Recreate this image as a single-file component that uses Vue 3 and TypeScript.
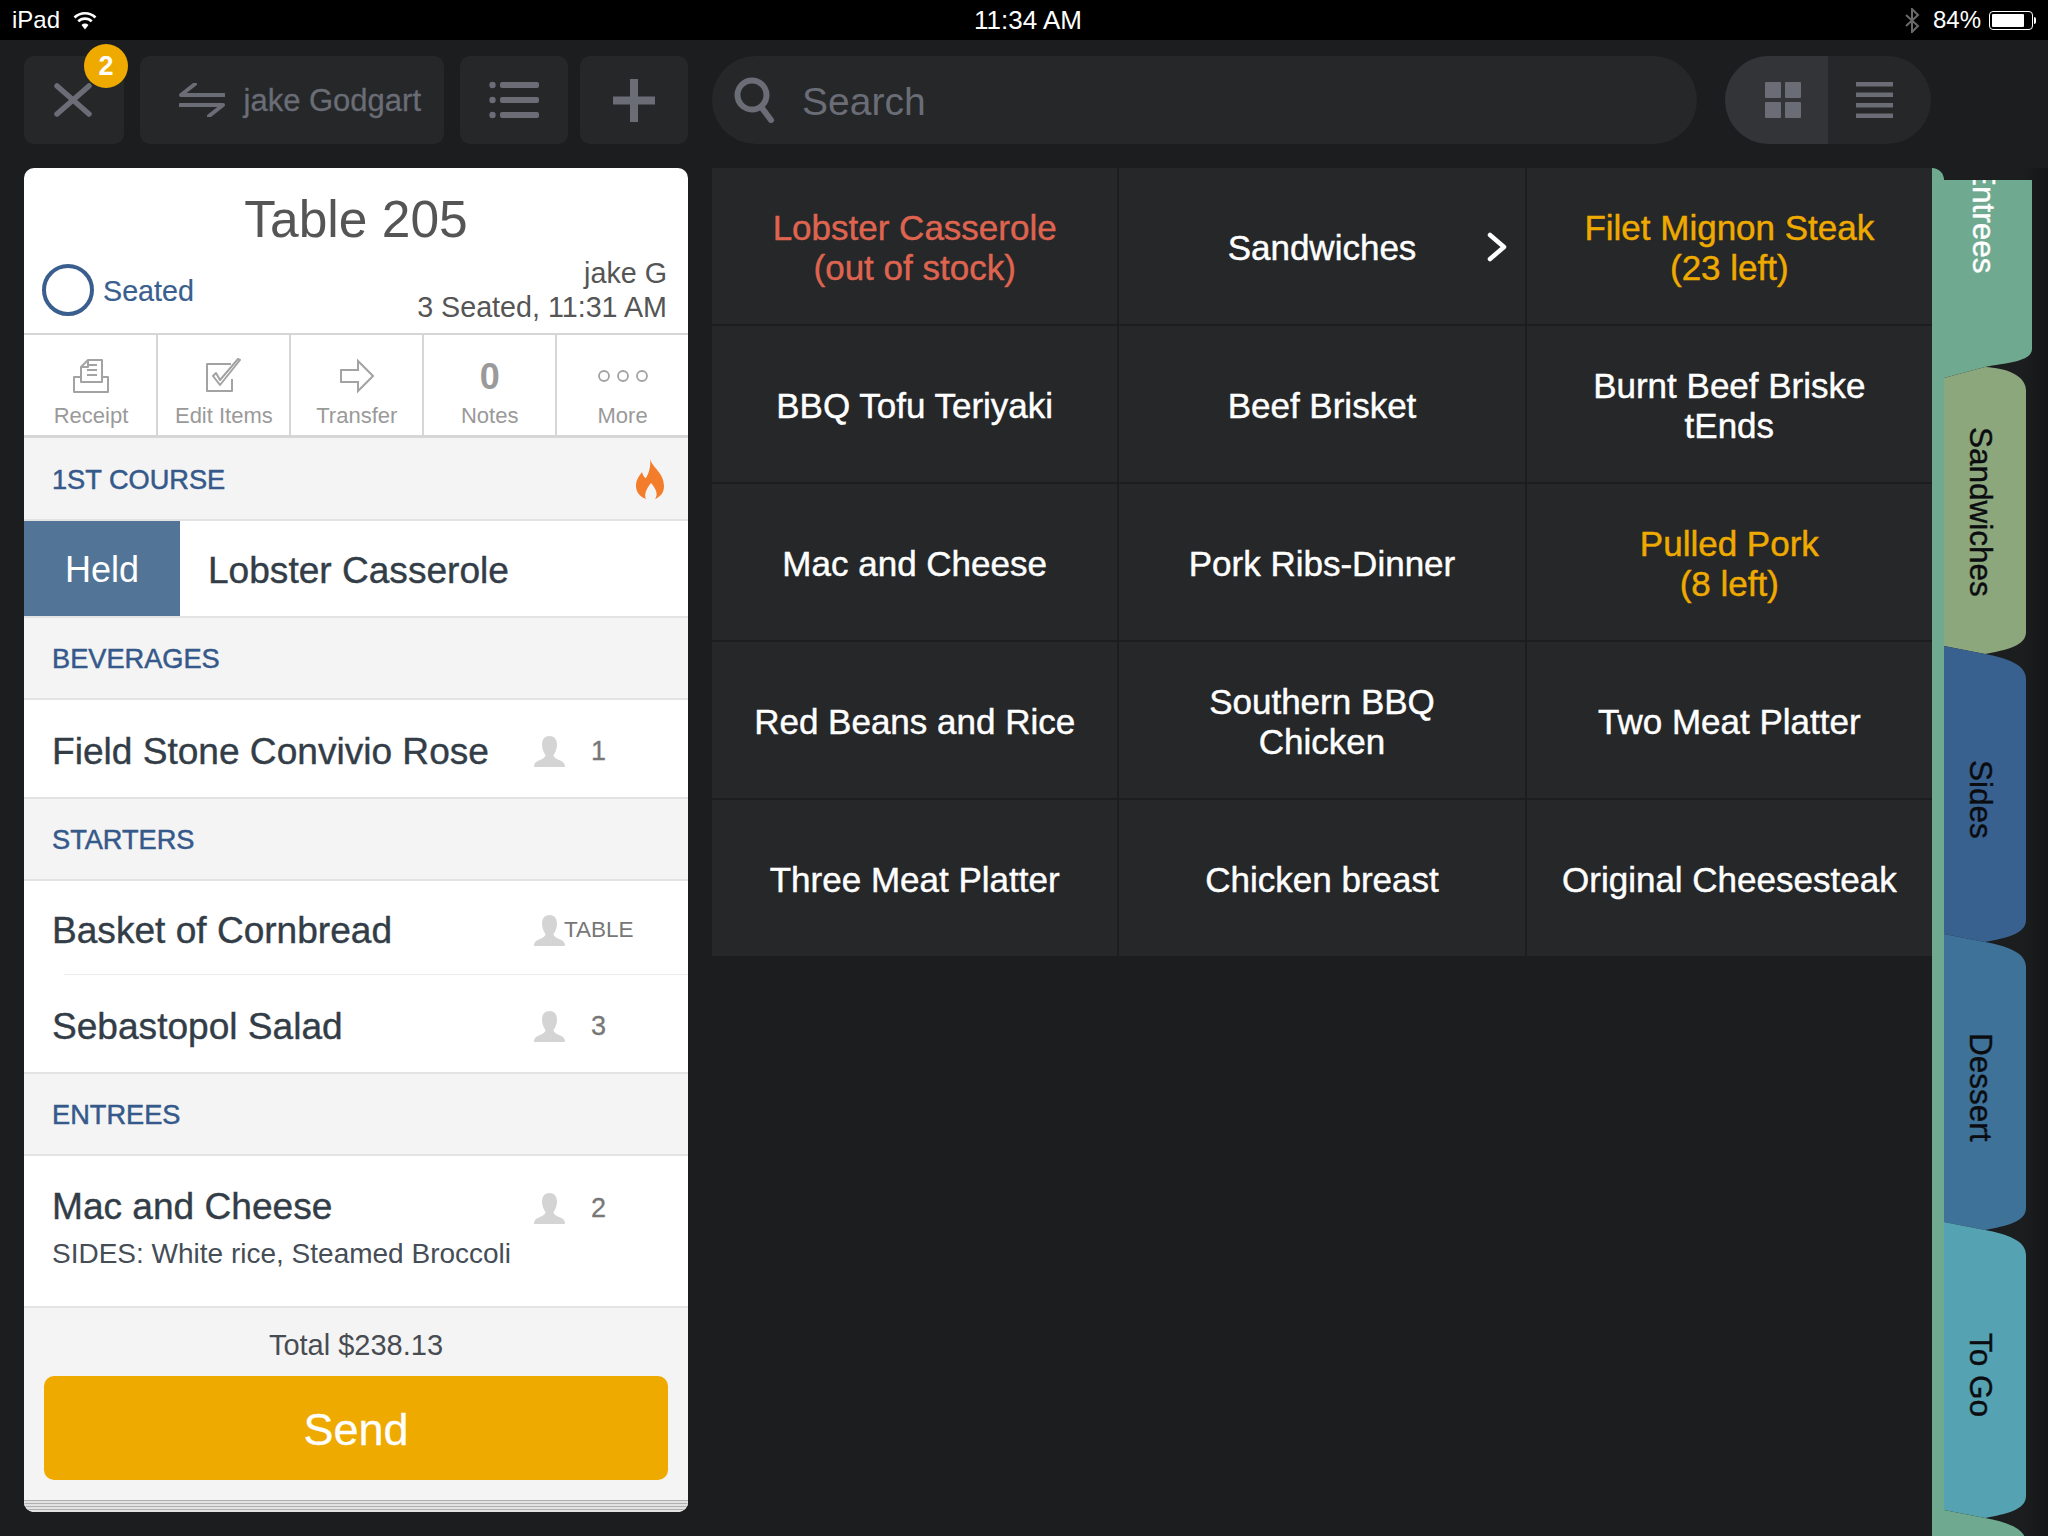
<script setup lang="ts">
interface MenuItem { lines: string[]; tone?: 'out' | 'low'; more?: boolean }
interface Tab { label: string; color: string; path: string; height: number; width: number; kind: string }
interface Action { label: string; icon: string }

const standardTab = 'M0 0 L41 8 C62 12 82 18 82 33 L82 274 C82 288 62 292 41 296 L0 288 Z'

const tabs: Tab[] = [
  { label: 'Entrees', color: '#6fa98f', height: 187, width: 100, kind: 'active', path: 'M0 0 L100 0 L100 169 C100 182 72 183 53 187 L12 198 L0 198 Z' },
  { label: 'Sandwiches', color: '#8da77d', height: 279, width: 82, kind: 'short', path: 'M0 11 L41 0 C62 1 82 8 82 24 L82 265 C82 279 62 283 41 287 L0 279 Z' },
  { label: 'Sides', color: '#396190', height: 288, width: 82, kind: '', path: standardTab },
  { label: 'Dessert', color: '#3f7299', height: 288, width: 82, kind: '', path: standardTab },
  { label: 'To Go', color: '#55a2b2', height: 288, width: 82, kind: '', path: standardTab },
  { label: '', color: '#6fa98f', height: 26, width: 82, kind: '', path: standardTab },
]

const menu: MenuItem[] = [
  { lines: ['Lobster Casserole', '(out of stock)'], tone: 'out' },
  { lines: ['Sandwiches'], more: true },
  { lines: ['Filet Mignon Steak', '(23 left)'], tone: 'low' },
  { lines: ['BBQ Tofu Teriyaki'] },
  { lines: ['Beef Brisket'] },
  { lines: ['Burnt Beef Briske', 'tEnds'] },
  { lines: ['Mac and Cheese'] },
  { lines: ['Pork Ribs-Dinner'] },
  { lines: ['Pulled Pork', '(8 left)'], tone: 'low' },
  { lines: ['Red Beans and Rice'] },
  { lines: ['Southern BBQ', 'Chicken'] },
  { lines: ['Two Meat Platter'] },
  { lines: ['Three Meat Platter'] },
  { lines: ['Chicken breast'] },
  { lines: ['Original Cheesesteak'] },
]

const actions: Action[] = [
  { label: 'Receipt', icon: 'receipt' },
  { label: 'Edit Items', icon: 'edit' },
  { label: 'Transfer', icon: 'transfer' },
  { label: 'Notes', icon: 'notes' },
  { label: 'More', icon: 'more' },
]

const personPath = 'M15.5 0C10 0 8 4 8 9C8 13 10 17 11.5 19C11.5 21 10 22 6 24C2 25.5 0 27 0 31L31 31C31 27 29 25.5 25 24C21 22 19.5 21 19.5 19C21 17 23 13 23 9C23 4 21 0 15.5 0Z'
</script>

<template>
  <div class="page">
    <header class="status">
      <div class="status-left">
        <span>iPad</span>
        <svg class="wifi" width="24" height="19" viewBox="0 0 24 19" fill="none" stroke="#fff" stroke-width="2.6">
          <path d="M1.5 6.5A15 15 0 0 1 22.5 6.5" />
          <path d="M5.3 10.4A9.5 9.5 0 0 1 18.7 10.4" />
          <path d="M8.5 14A5 5 0 0 1 15.5 14L12 18.5Z" fill="#fff" stroke="none" />
        </svg>
      </div>
      <div class="status-time">11:34 AM</div>
      <div class="status-right">
        <svg width="16" height="25" viewBox="0 0 16 25" fill="none" stroke="#6a6a6a" stroke-width="2">
          <path d="M2 7L14 18L8 24V1L14 7L2 18" />
        </svg>
        <span class="pct">84%</span>
        <div class="battery"><div class="battery-fill"></div></div>
        <div class="battery-nub"></div>
      </div>
    </header>

    <nav class="toolbar">
      <div class="btn btn-close">
        <svg width="38" height="34" viewBox="0 0 38 34" fill="none" stroke="#6a6d76" stroke-width="5.5" stroke-linecap="round">
          <path d="M3 3L35 31M35 3L3 31" />
        </svg>
        <span class="badge">2</span>
      </div>
      <div class="btn btn-user">
        <svg width="46" height="34" viewBox="0 0 46 34" fill="none" stroke="#6a6d76" stroke-width="4" stroke-linecap="round" stroke-linejoin="round">
          <path d="M45 12H2L16 1M1 22H44L30 33" />
        </svg>
        <span class="user-name">jake Godgart</span>
      </div>
      <div class="btn btn-list">
        <svg width="50" height="38" viewBox="0 0 50 38" fill="#6a6d76">
          <circle cx="3.5" cy="4" r="3.2" /><rect x="11" y="1" width="39" height="6" rx="2" />
          <circle cx="3.5" cy="19" r="3.2" /><rect x="11" y="16" width="39" height="6" rx="2" />
          <circle cx="3.5" cy="34" r="3.2" /><rect x="11" y="31" width="39" height="6" rx="2" />
        </svg>
      </div>
      <div class="btn btn-plus">
        <svg width="42" height="43" viewBox="0 0 42 43" fill="#6a6d76">
          <rect x="17" y="0" width="8" height="43" /><rect x="0" y="17.5" width="42" height="8" />
        </svg>
      </div>
      <div class="search">
        <svg width="42" height="46" viewBox="0 0 42 46" fill="none" stroke="#6a6d76" stroke-width="6" stroke-linecap="round">
          <circle cx="18" cy="18" r="14.5" /><path d="M28 31L37 43" />
        </svg>
        <span class="search-text">Search</span>
      </div>
      <div class="toggle">
        <div class="toggle-on">
          <svg width="36" height="36" viewBox="0 0 36 36" fill="#6a6d76">
            <rect width="16" height="16" rx="1" /><rect x="20" width="16" height="16" rx="1" />
            <rect y="20" width="16" height="16" rx="1" /><rect x="20" y="20" width="16" height="16" rx="1" />
          </svg>
        </div>
        <div class="toggle-off">
          <svg width="37" height="36" viewBox="0 0 37 36" fill="#6a6d76">
            <rect y="0" width="37" height="4.5" /><rect y="10.5" width="37" height="4.5" />
            <rect y="21" width="37" height="4.5" /><rect y="31.5" width="37" height="4.5" />
          </svg>
        </div>
      </div>
    </nav>

    <main class="main">
      <section class="card">
        <div class="card-head">
          <h1 class="title">Table 205</h1>
          <div class="meta">
            <div class="seated"><span class="ring"></span><span class="seated-text">Seated</span></div>
            <div class="meta-right"><div>jake G</div><div>3 Seated, 11:31 AM</div></div>
          </div>
        </div>

        <div class="actions">
          <div v-for="a in actions" :key="a.label" class="action">
            <div class="action-icon">
              <svg v-if="a.icon === 'receipt'" width="36" height="36" viewBox="0 0 36 36" fill="none" stroke="#a3a3a3" stroke-width="2" stroke-linejoin="round">
                <path d="M8 22V9L15 2H29V22" />
                <path d="M15 2V9H8" />
                <path d="M14 12H24M14 17H24M16 7H24" />
                <path d="M8 19H1V34H35V19H29V24H8Z" />
              </svg>
              <svg v-else-if="a.icon === 'edit'" width="36" height="36" viewBox="0 0 36 36" fill="none" stroke="#a3a3a3" stroke-width="2" stroke-linejoin="round">
                <path d="M25 6H1V33H26V21" />
                <path d="M7 18L14 27L34 2L32 1L14 22L10 15Z" />
              </svg>
              <svg v-else-if="a.icon === 'transfer'" width="34" height="36" viewBox="0 0 34 36" fill="none" stroke="#a3a3a3" stroke-width="2" stroke-linejoin="miter">
                <path d="M1 12H18V3L33 18L18 33V24H1Z" />
              </svg>
              <span v-else-if="a.icon === 'notes'" class="notes-count">0</span>
              <svg v-else width="50" height="12" viewBox="0 0 50 12" fill="none" stroke="#a3a3a3" stroke-width="1.8">
                <circle cx="6" cy="6" r="5" /><circle cx="25" cy="6" r="5" /><circle cx="44" cy="6" r="5" />
              </svg>
            </div>
            <div class="action-label">{{ a.label }}</div>
          </div>
        </div>

        <div class="section section-first">
          <span>1ST COURSE</span>
          <svg class="flame" width="28" height="40" viewBox="0 0 28 40" fill="#f47d2c">
            <path d="M14 0C16 8 28 14 28 27C28 34 24 38 19 40C22 36 21 31 15 24C10 30 8 36 10 40C4 38 0 33 0 27C0 20 4 16 6 13C7 17 9 19 10 19C13 14 15 7 14 0Z" />
          </svg>
        </div>
        <div class="row row-held">
          <div class="held">Held</div>
          <div class="item-name held-name">Lobster Casserole</div>
        </div>

        <div class="section">BEVERAGES</div>
        <div class="row row-item row-field">
          <div class="item-name">Field Stone Convivio Rose</div>
          <div class="seat"><svg width="31" height="31" viewBox="0 0 31 31" fill="#d4d4d4"><path :d="personPath" /></svg><span class="seat-num">1</span></div>
        </div>

        <div class="section">STARTERS</div>
        <div class="row row-item row-basket">
          <div class="item-name">Basket of Cornbread</div>
          <div class="seat"><svg width="31" height="31" viewBox="0 0 31 31" fill="#d4d4d4"><path :d="personPath" /></svg><span class="seat-table">TABLE</span></div>
        </div>
        <div class="rule"></div>
        <div class="row row-item row-salad">
          <div class="item-name">Sebastopol Salad</div>
          <div class="seat"><svg width="31" height="31" viewBox="0 0 31 31" fill="#d4d4d4"><path :d="personPath" /></svg><span class="seat-num">3</span></div>
        </div>

        <div class="section">ENTREES</div>
        <div class="row-mac">
          <div class="mac-top">
            <div class="item-name">Mac and Cheese</div>
            <div class="seat seat-mac"><svg width="31" height="31" viewBox="0 0 31 31" fill="#d4d4d4"><path :d="personPath" /></svg><span class="seat-num">2</span></div>
          </div>
          <div class="sides">SIDES: White rice, Steamed Broccoli</div>
        </div>

        <div class="foot">
          <div class="total">Total $238.13</div>
          <div class="send">Send</div>
          <div class="stack"></div>
        </div>
      </section>

      <section class="menu">
        <div v-for="(m, i) in menu" :key="i" class="cell" :class="m.tone">
          <div v-for="line in m.lines" :key="line">{{ line }}</div>
          <svg v-if="m.more" class="chevron" width="20" height="30" viewBox="0 0 20 30" fill="none" stroke="#fff" stroke-width="4.5" stroke-linecap="round" stroke-linejoin="round">
            <path d="M3 3L17 15L3 27" />
          </svg>
        </div>
      </section>

      <aside class="rail">
        <div class="tabs">
          <div
            v-for="t in tabs"
            :key="t.color + t.label"
            class="tab"
            :class="t.kind"
            :style="{ height: t.height + 'px', width: t.width + 'px' }"
          >
            <svg class="tab-shape" :width="t.width" :height="t.height" :viewBox="`0 0 ${t.width} ${t.height}`" :fill="t.color">
              <path :d="t.path" />
            </svg>
            <span v-if="t.label" class="tab-label">{{ t.label }}</span>
          </div>
        </div>
      </aside>
    </main>
  </div>
</template>

<style scoped>
.page {
  width: 2048px;
  height: 1536px;
  overflow: hidden;
  background: #1b1d1f;
  font-family: "Liberation Sans", Arial, sans-serif;
}

/* status bar */
.status {
  height: 40px;
  background: #000;
  color: #fff;
  display: grid;
  grid-template-columns: 1fr auto 1fr;
  align-items: center;
  font-size: 24px;
}
.status-left {
  display: flex;
  align-items: center;
  gap: 13px;
  padding-left: 12px;
}
.status-time { font-size: 26px; padding-left: 8px; }
.status-right {
  display: flex;
  align-items: center;
  justify-content: flex-end;
  padding-right: 12px;
}
.pct { margin-left: 13px; margin-right: 8px; }
.battery {
  width: 44px;
  height: 19px;
  box-sizing: border-box;
  border: 1.5px solid #fff;
  border-radius: 4px;
  padding: 2px;
}
.battery-fill { width: 84%; height: 100%; background: #fff; border-radius: 1px; }
.battery-nub { width: 2px; height: 7px; background: #fff; margin-left: 1px; border-radius: 0 2px 2px 0; }

/* toolbar */
.toolbar {
  display: flex;
  padding: 16px 0 0 24px;
  height: 88px;
  color: #6a6d76;
}
.btn {
  height: 88px;
  background: #252729;
  border-radius: 10px;
  display: flex;
  align-items: center;
  justify-content: center;
  position: relative;
}
.btn-close { width: 100px; margin-right: 16px; justify-content: flex-start; padding-left: 30px; box-sizing: border-box; }
.badge {
  position: absolute;
  left: 60px;
  top: -12px;
  width: 44px;
  height: 44px;
  border-radius: 50%;
  background: #efaa00;
  color: #fff;
  font-size: 27px;
  font-weight: 700;
  display: flex;
  align-items: center;
  justify-content: center;
}
.btn-user { width: 304px; margin-right: 16px; gap: 19px; font-size: 31px; justify-content: flex-end; padding-right: 23px; box-sizing: border-box; }
.user-name { padding-top: 2px; -webkit-text-stroke: 0.3px currentColor; }
.btn-list { width: 108px; margin-right: 12px; box-sizing: border-box; }
.btn-plus { width: 108px; margin-right: 24px; }
.search {
  width: 985px;
  height: 88px;
  background: #252729;
  border-radius: 44px;
  display: flex;
  align-items: center;
  box-sizing: border-box;
  padding-left: 22px;
  gap: 26px;
  font-size: 39px;
  margin-right: 28px;
}
.search-text { padding-top: 3px; }
.toggle {
  width: 206px;
  height: 88px;
  border-radius: 44px;
  overflow: hidden;
  display: flex;
  background: #252729;
}
.toggle-on {
  width: 103px;
  background: #323437;
  display: flex;
  align-items: center;
  justify-content: flex-end;
  padding-right: 27px;
  box-sizing: border-box;
}
.toggle-off {
  flex: 1;
  display: flex;
  align-items: center;
  justify-content: flex-start;
  padding-left: 28px;
}

/* main layout */
.main {
  display: flex;
  margin-top: 24px;
  padding-left: 24px;
  height: 1368px;
  align-items: flex-start;
}

/* ticket card */
.card {
  width: 664px;
  height: 1344px;
  background: #fff;
  border-radius: 10px;
  overflow: hidden;
  margin-right: 24px;
  flex: none;
  color: #333d47;
}
.card-head { height: 165px; box-sizing: border-box; padding-top: 22px; color: #555; }
.title {
  margin: 0 0 8px;
  font-size: 51.5px;
  line-height: 58px;
  font-weight: 400;
  text-align: center;
  color: #555;
}
.meta {
  display: flex;
  justify-content: space-between;
  align-items: center;
  height: 68px;
  padding: 0 21px 0 18px;
  font-size: 28.7px;
  line-height: 34px;
}
.seated { display: flex; align-items: center; gap: 9px; color: #3a5f8e; }
.seated-text { padding-top: 2px; -webkit-text-stroke: 0.2px currentColor; }
.ring {
  width: 52px;
  height: 52px;
  box-sizing: border-box;
  border: 4px solid #3a5f8e;
  border-radius: 50%;
}
.meta-right { text-align: right; }

.actions {
  display: flex;
  height: 100px;
  padding-left: 1.5px;
  border-top: 2px solid #d6d6d6;
  border-bottom: 3px solid #d6d6d6;
}
.action {
  flex: 1;
  border-right: 2px solid #d6d6d6;
  text-align: center;
  display: flex;
  flex-direction: column;
  align-items: center;
}
.action:last-child { border-right: 0; }
.action-icon {
  height: 67px;
  display: flex;
  align-items: center;
  justify-content: center;
  padding-top: 14px;
  box-sizing: border-box;
}
.notes-count { font-size: 36px; font-weight: 700; color: #9a9a9a; padding-top: 3px; }
.action-label { font-size: 22px; line-height: 28px; color: #9a9a9a; }

.section {
  height: 78px;
  background: #f4f4f4;
  border-bottom: 2px solid #e3e3e3;
  display: flex;
  align-items: center;
  justify-content: space-between;
  padding: 2px 24px 0 28px;
  font-size: 27.2px;
  color: #34598a;
  -webkit-text-stroke: 0.5px #34598a;
}
.section-first { height: 79px; }
.flame { margin-top: -2px; }
.row { display: flex; align-items: center; background: #fff; }
.row-held { height: 95px; border-bottom: 2px solid #e3e3e3; }
.held {
  width: 156px;
  height: 100%;
  box-sizing: border-box;
  padding-top: 3px;
  background: #527497;
  color: #fff;
  font-size: 36px;
  display: flex;
  align-items: center;
  justify-content: center;
}
.held-name { margin-left: 28px; padding-top: 3px; }
.item-name { font-size: 37.1px; color: #333d47; flex: 1; -webkit-text-stroke: 0.4px #333d47; }
.row-item { padding-left: 28px; padding-top: 6px; box-sizing: border-box; }
.row-field { height: 99px; border-bottom: 2px solid #e3e3e3; }
.row-basket { height: 93px; }
.rule { height: 1px; margin-left: 40px; background: #ececec; }
.row-salad { height: 99px; border-bottom: 2px solid #e3e3e3; }
.seat { width: 154px; display: flex; align-items: center; flex: none; }
.seat-mac { padding-top: 4px; }
.seat-num { margin-left: 26px; font-size: 27px; color: #777; -webkit-text-stroke: 0.3px #777; }
.seat-table { font-size: 22.5px; color: #777; margin-top: -2px; margin-left: -1px; }
.row-mac { height: 152px; box-sizing: border-box; padding: 26px 0 0 28px; border-bottom: 2px solid #e3e3e3; }
.mac-top { display: flex; align-items: center; height: 48px; }
.sides { margin-top: 6px; font-size: 28px; line-height: 36px; color: #454d56; }
.foot {
  background: #f4f4f4;
  height: 204px;
  box-sizing: border-box;
  padding-top: 22px;
  display: flex;
  flex-direction: column;
  align-items: center;
}
.total { font-size: 29px; line-height: 30px; color: #484c52; margin-bottom: 16px; }
.send {
  width: 624px;
  height: 104px;
  box-sizing: border-box;
  padding-top: 3px;
  border-radius: 10px;
  background: #efaa00;
  color: #fff;
  font-size: 45px;
  display: flex;
  align-items: center;
  justify-content: center;
  -webkit-text-stroke: 0.3px #fff;
}
.stack {
  margin-top: 20px;
  width: 100%;
  height: 12px;
  background: repeating-linear-gradient(#b0b0b0 0 1px, #e2e2e2 1px 3px);
  border-radius: 0 0 10px 10px;
}

/* menu grid */
.menu {
  width: 1220px;
  flex: none;
  display: grid;
  grid-template-columns: repeat(3, 1fr);
  grid-auto-rows: 156px;
  gap: 2px;
}
.cell {
  background: #252729;
  color: #fff;
  font-size: 35px;
  line-height: 40px;
  display: flex;
  flex-direction: column;
  align-items: center;
  justify-content: center;
  text-align: center;
  padding-top: 4px;
  box-sizing: border-box;
  position: relative;
  -webkit-text-stroke: 0.45px currentColor;
}
.cell.out { color: #df6450; }
.cell.low { color: #efaa00; }
.chevron { position: absolute; right: 18px; top: 64px; }

/* category rail */
.rail {
  width: 116px;
  height: 1368px;
  flex: none;
  position: relative;
  background: linear-gradient(90deg, transparent 90px, #131517 116px);
}
.rail::before {
  content: "";
  position: absolute;
  left: 0;
  top: 0;
  bottom: 0;
  width: 12px;
  background: #6fa98f;
  border-radius: 0 12px 0 0;
}
.tabs { padding: 12px 0 0 12px; display: flex; flex-direction: column; }
.tab {
  position: relative;
  flex: none;
  display: flex;
  align-items: center;
  justify-content: center;
}
.tab.active { margin-left: -12px; align-items: flex-start; }
.tab-shape { position: absolute; left: 0; top: 0; overflow: visible; }
.tab-label {
  position: relative;
  writing-mode: vertical-rl;
  font-size: 31.5px;
  color: #0a0c10;
  margin-top: 18px;
  margin-right: 10px;
  -webkit-text-stroke: 0.4px currentColor;
}
.tab.short .tab-label { margin-top: 10px; }
.tab.active .tab-label {
  color: #fff;
  margin-top: -15px;
  margin-right: 0;
  margin-left: 2px;
  clip-path: inset(15px -10px 0 -10px);
}
</style>

<style>
html, body { background: #1b1d1f; margin: 0; }
</style>
